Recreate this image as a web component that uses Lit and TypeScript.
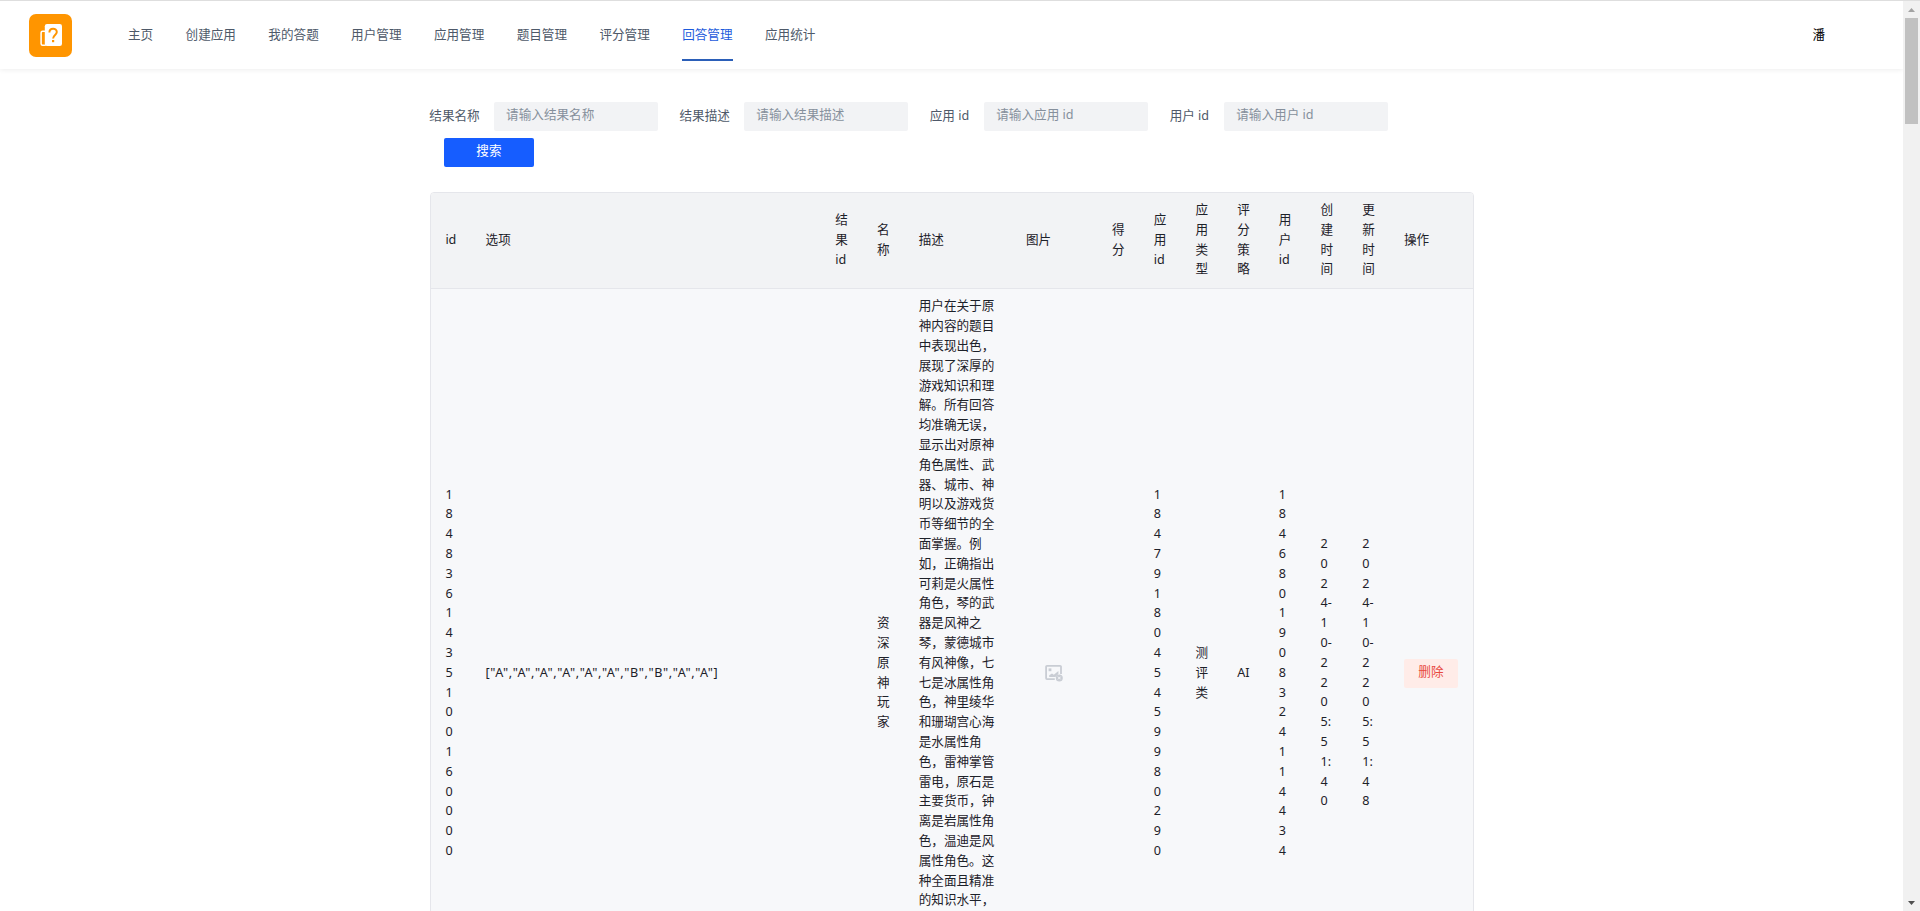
import { LitElement, html, css } from "lit";
import { customElement } from "lit/decorators.js";
import { classMap } from "lit/directives/class-map.js";

const NAV = ["主页", "创建应用", "我的答题", "用户管理", "应用管理", "题目管理", "评分管理", "回答管理", "应用统计"];
const ACTIVE = "回答管理";

const FILTERS = [
  { label: "结果名称", wide: true },
  { label: "结果描述", wide: true },
  { label: "应用 id", wide: false },
  { label: "用户 id", wide: false },
];

const COLUMNS = [
  { title: "id", width: 40.2 },
  { title: "选项", width: 349.8 },
  { title: "结果id", width: 41.7 },
  { title: "名称", width: 41.7 },
  { title: "描述", width: 107.2 },
  { title: "图片", width: 86.2 },
  { title: "得分", width: 41.7 },
  { title: "应用id", width: 41.7 },
  { title: "应用类型", width: 41.7 },
  { title: "评分策略", width: 41.7 },
  { title: "用户id", width: 41.7 },
  { title: "创建时间", width: 41.7 },
  { title: "更新时间", width: 41.7 },
  { title: "操作", width: 84 },
];

const DESC = [
  "用户在关于原", "神内容的题目", "中表现出色，", "展现了深厚的", "游戏知识和理", "解。所有回答",
  "均准确无误，", "显示出对原神", "角色属性、武", "器、城市、神", "明以及游戏货", "币等细节的全",
  "面掌握。例", "如，正确指出", "可莉是火属性", "角色，琴的武", "器是风神之", "琴，蒙德城市",
  "有风神像，七", "七是冰属性角", "色，神里绫华", "和珊瑚宫心海", "是水属性角", "色，雷神掌管",
  "雷电，原石是", "主要货币，钟", "离是岩属性角", "色，温迪是风", "属性角色。这", "种全面且精准", "的知识水平，",
].join("\n");

@customElement("app-root")
export class AppRoot extends LitElement {
  static styles = css`
    :host {
      display: flex;
      box-sizing: border-box;
      width: 100%;
      height: 911px;
      overflow: hidden;
      border-top: 1px solid #dedede;
      background: #fff;
      color: #1d2129;
      font: 12.6px/19.8px "Noto Sans", "Noto Sans CJK SC", sans-serif;
    }
    * { box-sizing: border-box; }
    .page { flex: 1; min-width: 0; height: 910px; overflow: hidden; }
    .header {
      display: flex;
      align-items: center;
      height: 68px;
      padding: 0 78px 0 29px;
      box-shadow: 0 1px 5px rgba(0, 0, 0, 0.07);
    }
    .logo { display: block; width: 43px; height: 43px; margin-right: 56px; }
    .nav { display: flex; flex: 1; gap: 32.4px; height: 60px; align-self: flex-start; color: #4e5969; }
    .nav-item { height: 60px; padding-top: 24px; white-space: nowrap; }
    .nav-item.active { color: #1d5bdc; border-bottom: 2px solid #2b5fb8; }
    .user { color: #000; }
    .content { width: 1046px; margin-left: 429.3px; padding-top: 33px; }
    .filters { display: flex; flex-wrap: wrap; row-gap: 7.2px; color: #4e5969; }
    .field { display: flex; align-items: center; margin-right: 21.6px; }
    .label { width: 54.6px; padding-bottom: 1.4px; white-space: nowrap; }
    .label.wide { width: 64.8px; }
    .input {
      width: 163.8px;
      height: 28.8px;
      border-radius: 2px;
      background: #f2f3f5;
      color: #86909c;
      padding: 3px 12px;
    }
    .search {
      width: 90px;
      height: 28.8px;
      margin-left: 14.6px;
      border-radius: 2px;
      background: #165dff;
      color: #fff;
      text-align: center;
      line-height: 26px;
    }
    .frame {
      width: 1043.6px;
      margin: 25.2px 0 0 0.7px;
      border: 1px solid #e5e6eb;
      border-radius: 4px;
      overflow: hidden;
    }
    table { width: 100%; table-layout: fixed; border-collapse: separate; border-spacing: 0; }
    th, td {
      padding: 7.1px 14.2px 9.1px 14.4px;
      font-weight: 400;
      text-align: left;
      vertical-align: middle;
      word-break: break-all;
    }
    th { height: 96px; background: #f2f3f5; border-bottom: 1px solid #e5e6eb; }
    td { height: 768.6px; background: #f7f8fa; }
    .choices { letter-spacing: 0.6px; }
    .nowrap, .desc { padding-right: 0; }
    .desc { vertical-align: top; white-space: pre; }
    .picture { display: flex; width: 57px; height: 54px; padding-top: 1px; align-items: center; justify-content: center; }
    .picture svg { display: block; width: 18px; height: 18px; }
    .action { padding-top: 8.1px; padding-bottom: 8.1px; }
    .delete {
      width: 54px;
      height: 28.8px;
      border-radius: 2px;
      background: #ffece8;
      color: #e8483f;
      text-align: center;
      line-height: 26px;
    }
    .scrollbar {
      display: flex;
      flex-direction: column;
      align-items: center;
      width: 17px;
      height: 910px;
      background: #f1f1f1;
    }
    .thumb { width: 13px; height: 106px; background: #c1c1c1; }
    .arrow { width: 17px; height: 17px; display: block; }
    .space { flex: 1; }
  `;

  private renderLogo() {
    return html`<svg class="logo" viewBox="0 0 43 43">
      <rect width="43" height="43" rx="7" fill="#ff9500" />
      <rect x="12.1" y="17.2" width="5" height="14" rx="1.5" fill="#ff9500" stroke="#fff" stroke-width="1.5" />
      <rect x="15.8" y="10" width="17.2" height="22" rx="2.2" fill="#fff" />
      <path d="M20.4 18.4c0-4.8 7.4-4.8 7.4-.4 0 2.9-3.7 3.1-3.7 6.6" fill="none" stroke="#ff9500" stroke-width="2" />
      <rect x="23" y="26" width="2.2" height="2.2" fill="#ff9500" />
    </svg>`;
  }

  private renderRow() {
    return html`<tr>
      <td>1848361435100160000</td>
      <td class="choices">["A","A","A","A","A","A","B","B","A","A"]</td>
      <td></td>
      <td>资深原神玩家</td>
      <td class="desc">${DESC}</td>
      <td class="nowrap">
        <div class="picture">
          <svg viewBox="0 0 18 18" fill="none" stroke="#c9cdd4" stroke-width="1.8">
            <path d="M9.8 15.2H2a.9.9 0 0 1-.9-.9V2.7a.9.9 0 0 1 .9-.9h13.1a.9.9 0 0 1 .9.9V10" />
            <rect x="3.6" y="4.4" width="2.8" height="2.8" fill="#c9cdd4" stroke="none" />
            <path d="M4.2 13v-1.8l2.8-1.6 1.8 1.2 4.6-3.8v3L10.4 13z" fill="#c9cdd4" stroke="none" />
            <circle cx="14.3" cy="14" r="3.5" fill="#c9cdd4" stroke="none" />
            <path d="M13 12.7l2.6 2.6M15.6 12.7L13 15.3" stroke="#f7f8fa" stroke-width="1" />
          </svg>
        </div>
      </td>
      <td></td>
      <td>1847918045459980290</td>
      <td>测评类</td>
      <td>AI</td>
      <td>1846801908324114434</td>
      <td>2024-10-22 05:51:40</td>
      <td>2024-10-22 05:51:48</td>
      <td class="action"><div class="delete">删除</div></td>
    </tr>`;
  }

  render() {
    return html`
      <div class="page">
        <header class="header">
          ${this.renderLogo()}
          <nav class="nav">
            ${NAV.map((n) => html`<div class=${classMap({ "nav-item": true, active: n === ACTIVE })}>${n}</div>`)}
          </nav>
          <div class="user">潘</div>
        </header>
        <main class="content">
          <div class="filters">
            ${FILTERS.map(
              (f) => html`<div class="field">
                <div class=${classMap({ label: true, wide: f.wide })}>${f.label}</div>
                <div class="input">请输入${f.label}</div>
              </div>`
            )}
            <div class="search">搜索</div>
          </div>
          <div class="frame">
            <table>
              <colgroup>${COLUMNS.map((c) => html`<col style="width:${c.width}px" />`)}</colgroup>
              <thead><tr>${COLUMNS.map((c) => html`<th>${c.title}</th>`)}</tr></thead>
              <tbody>${this.renderRow()}</tbody>
            </table>
          </div>
        </main>
      </div>
      <div class="scrollbar">
        <svg class="arrow" viewBox="0 0 17 17"><path d="M5 11l3.5-4 3.5 4z" fill="#a3a3a3" /></svg>
        <div class="thumb"></div>
        <div class="space"></div>
        <svg class="arrow" viewBox="0 0 17 17"><path d="M5 7l3.5 4L12 7z" fill="#505050" /></svg>
      </div>
    `;
  }
}
